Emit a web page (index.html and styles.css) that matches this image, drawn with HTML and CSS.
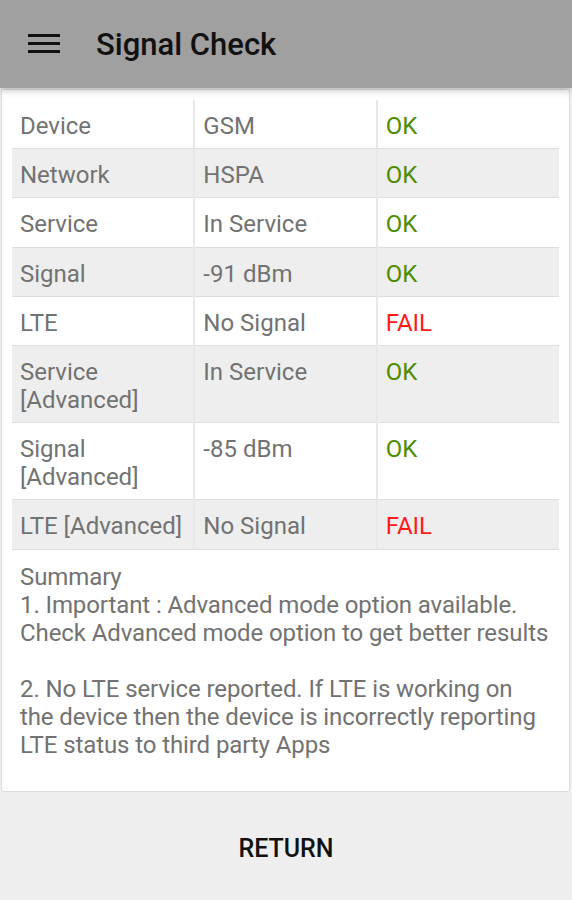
FILE: index.html
```html
<!DOCTYPE html>
<html>
<head>
<meta charset="utf-8">
<link rel="stylesheet" href="styles.css">
</head>
<body>
<div class="app">
  <header class="toolbar">
    <svg class="menu" width="32" height="20" viewBox="0 0 32 20"><rect x="0" y="0" width="32" height="3" fill="#111"/><rect x="0" y="8" width="32" height="3" fill="#111"/><rect x="0" y="16" width="32" height="3" fill="#111"/></svg>
    <h1 class="title">Signal Check</h1>
  </header>
  <main class="card">
    <table class="results">
      <tr><td>Device</td><td>GSM</td><td class="ok">OK</td></tr>
      <tr><td>Network</td><td>HSPA</td><td class="ok">OK</td></tr>
      <tr><td>Service</td><td>In Service</td><td class="ok">OK</td></tr>
      <tr><td>Signal</td><td>-91 dBm</td><td class="ok">OK</td></tr>
      <tr><td>LTE</td><td>No Signal</td><td class="fail">FAIL</td></tr>
      <tr><td>Service<br>[Advanced]</td><td>In Service</td><td class="ok">OK</td></tr>
      <tr><td>Signal<br>[Advanced]</td><td>-85 dBm</td><td class="ok">OK</td></tr>
      <tr><td>LTE [Advanced]</td><td>No Signal</td><td class="fail">FAIL</td></tr>
    </table>
    <p class="summary">Summary<br>1. Important : Advanced mode option available. Check Advanced mode option to get better results<br><br>2. No LTE service reported. If LTE is working on the device then the device is incorrectly reporting LTE status to third party Apps</p>
  </main>
  <footer class="actions">
    <button class="return">RETURN</button>
  </footer>
</div>
</body>
</html>
```
FILE: styles.css
```css
* { box-sizing: border-box; }
html, body { margin: 0; padding: 0; }
body {
  width: 572px;
  height: 900px;
  background: #eeeeee;
  font-family: Roboto, "Liberation Sans", sans-serif;
  overflow: hidden;
}
.app {
  display: flex;
  flex-direction: column;
  height: 900px;
}
.toolbar {
  height: 88px;
  background: #a0a0a0;
  display: flex;
  align-items: center;
  padding-left: 28px;
  position: relative;
  z-index: 2;
  box-shadow: 0 2px 8px rgba(0,0,0,0.25);
  flex: none;
}
.menu { display: block; }
.title {
  margin: 0 0 0 36px;
  font-size: 31px;
  font-weight: 500;
  color: #111;
}
.card {
  margin: 1px 2px 0 1px;
  background: #fff;
  border: 1px solid #dcdcdc;
  border-radius: 3px;
  padding: 10px 10px 0 10px;
  height: 703px;
  flex: none;
}
.results {
  width: 547px;
  border-collapse: collapse;
  table-layout: fixed;
  font-size: 24px;
  line-height: 28px;
  color: #727272;
}
.results td {
  padding: 12px 8px 8.2px 8px;
  vertical-align: top;
  border-bottom: 1px solid #dedede;
  border-left: 2px solid #e8e8e8;
  white-space: nowrap;
}
.results td:first-child { border-left: none; }
.results tr:nth-child(even) td { background: #eeeeee; }
.results .ok { color: #4e8c00; }
.results .fail { color: #ff1a1a; }
.summary {
  margin: 0;
  padding: 13px 0 0 8px;
  width: 538px;
  font-size: 24px;
  line-height: 28px;
  color: #727272;
  letter-spacing: -0.1px;
}
.actions {
  flex: 1;
  display: flex;
  align-items: center;
  justify-content: center;
}
.return {
  background: none;
  border: none;
  font-family: Roboto, "Liberation Sans", sans-serif;
  font-size: 25px;
  font-weight: 500;
  color: #111;
  padding: 0;
  margin-top: 4px;
}
```
